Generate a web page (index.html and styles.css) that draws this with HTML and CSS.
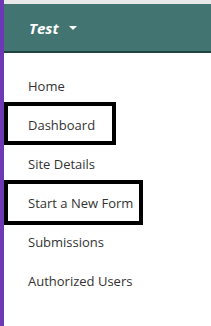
FILE: index.html
```html
<!DOCTYPE html>
<html lang="en">
<head>
    <meta charset="UTF-8">
    <meta name="viewport" content="width=device-width, initial-scale=1.0">
    <title>Test</title>
    <link rel="stylesheet" href="styles.css">
</head>
<body>
    <div class="page">
        <div class="rail"></div>
        <div class="main">
            <div class="top-strip"></div>
            <header class="site-header">
                <span class="site-name">Test</span>
                <span class="caret"></span>
            </header>
            <ul class="side-nav">
                <li class="nav-item">Home</li>
                <li class="nav-item">Dashboard<span class="mark mark-dashboard"></span></li>
                <li class="nav-item">Site Details</li>
                <li class="nav-item">Start a New Form<span class="mark mark-form"></span></li>
                <li class="nav-item">Submissions</li>
                <li class="nav-item">Authorized Users</li>
            </ul>
        </div>
    </div>
</body>
</html>
```

FILE: styles.css
```css
:root {
    --rail-purple: #6c38b3;
    --header-teal: #427571;
    --header-dark: #1d4642;
    --strip-gray: #e8e8e8;
    --text-dark: #333333;
}

body, html {
    margin: 0;
    padding: 0;
    height: 100%;
    font-family: 'Open Sans', sans-serif;
    background: #ffffff;
    overflow: hidden;
}

.page {
    display: flex;
    height: 100%;
}

.rail {
    width: 4px;
    flex-shrink: 0;
    background: var(--rail-purple);
}

.main {
    flex: 1;
    display: flex;
    flex-direction: column;
}

.top-strip {
    height: 4px;
    background: var(--strip-gray);
}

.site-header {
    height: 47px;
    background: var(--header-teal);
    border-bottom: 2px solid var(--header-dark);
    display: flex;
    align-items: center;
    padding-left: 25px;
    gap: 10px;
}

.site-name {
    color: #ffffff;
    font-size: 15px;
    font-weight: bold;
    font-style: italic;
}

.caret {
    width: 0;
    height: 0;
    border-left: 4px solid transparent;
    border-right: 4px solid transparent;
    border-top: 4px solid #ffffff;
    margin-top: 1px;
}

.side-nav {
    list-style: none;
    margin: 0;
    padding: 14px 0 0 0;
}

.nav-item {
    position: relative;
    height: 39px;
    line-height: 39px;
    padding-left: 24px;
    font-size: 13px;
    color: var(--text-dark);
}

.mark {
    position: absolute;
    left: 0;
    border: 4px solid #000000;
    box-sizing: border-box;
}

.mark-dashboard {
    top: -4px;
    width: 112px;
    height: 43px;
}

.mark-form {
    top: -4px;
    width: 139px;
    height: 45px;
}
```
